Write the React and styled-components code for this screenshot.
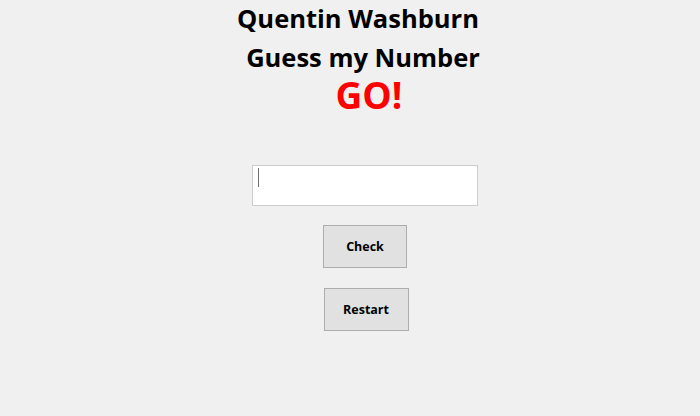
import React from "react";
import styled, { createGlobalStyle } from "styled-components";

const Global = createGlobalStyle`
  html, body { margin: 0; padding: 0; background: #f0f0f0; }
  body { width: 700px; height: 416px; overflow: hidden; font-family: "Open Sans", "Noto Sans", sans-serif; }
`;

const Page = styled.div`
  width: 700px;
  height: 416px;
  box-sizing: border-box;
  padding-left: 30px;
  display: flex;
  flex-direction: column;
  align-items: center;
`;

const Heading = styled.div`
  font-weight: 700;
  font-size: ${(p) => p.$size}px;
  line-height: ${(p) => p.$lh}px;
  color: ${(p) => p.$color || "#000"};
  margin-top: ${(p) => p.$mt || 0}px;
  transform: translateX(${(p) => p.$dx || 0}px);
  white-space: nowrap;
`;

const InputWrap = styled.div`
  position: relative;
  margin-top: ${(p) => p.$mt}px;
`;

const TextInput = styled.input`
  display: block;
  width: 226px;
  height: 41px;
  box-sizing: border-box;
  border: 1px solid #cccccc;
  background: #ffffff;
  outline: none;
  padding: 0 6px;
  font-family: inherit;
  font-size: 16px;
`;

const Caret = styled.span`
  position: absolute;
  left: 6px;
  top: 3px;
  width: 1px;
  height: 19px;
  background: #6e6e6e;
`;

const Button = styled.button`
  display: block;
  width: ${(p) => p.$w}px;
  height: 43px;
  margin-top: ${(p) => p.$mt}px;
  transform: translateX(${(p) => p.$dx || 0}px);
  box-sizing: border-box;
  border: 1px solid #adadad;
  background: #e1e1e1;
  font-family: "Open Sans", "Noto Sans", sans-serif;
  font-weight: 700;
  font-size: 12.5px;
  color: #000;
  padding: 0;
`;

export default function App() {
  return (
    <>
      <Global />
      <Page>
        <Heading $size={25.5} $lh={36} $dx={-7}>Quentin Washburn</Heading>
        <Heading $size={25.5} $lh={36} $mt={3} $dx={-2}>Guess my Number</Heading>
        <Heading $size={37} $lh={40} $color="#ff0000" $dx={4}>GO!</Heading>
        <InputWrap $mt={50}>
          <TextInput type="text" />
          <Caret />
        </InputWrap>
        <Button $w={84} $mt={19}>Check</Button>
        <Button $w={85} $mt={20} $dx={1}>Restart</Button>
      </Page>
    </>
  );
}
